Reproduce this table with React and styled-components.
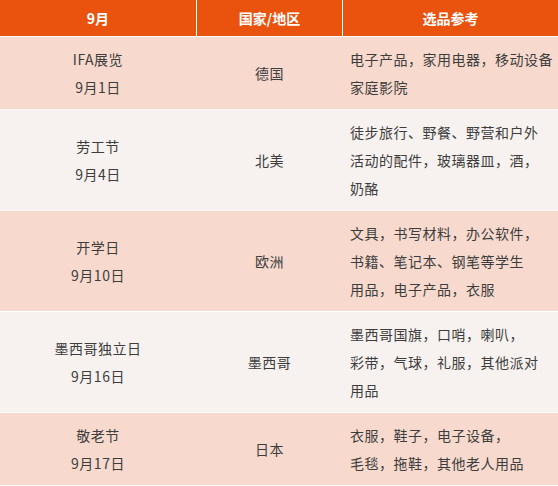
import React from 'react';
import styled, { createGlobalStyle } from 'styled-components';

const GlobalStyle = createGlobalStyle`
  html, body {
    margin: 0;
    padding: 0;
    background: #fff;
    overflow: hidden;
  }
  body {
    font-family: "Noto Sans CJK SC", "Liberation Sans", sans-serif;
  }
`;

const Table = styled.div`
  width: 558px;
  display: flex;
  flex-direction: column;
`;

const Row = styled.div`
  display: grid;
  grid-template-columns: 196px 145px 1fr;
  column-gap: 1px;
  background: ${p => p.$bg};
  border-bottom: 1px solid #fff;
`;

const HeadCell = styled.div`
  background: #e9530e;
  color: #fff;
  font-weight: bold;
  font-size: 14px;
  height: 36px;
  display: flex;
  align-items: center;
  justify-content: center;
`;

const Cell = styled.div`
  padding: 8px 7px;
  font-size: 14px;
  line-height: 28px;
  color: #3d3d3d;
  letter-spacing: 0.5px;
  display: flex;
  flex-direction: column;
  justify-content: center;
  align-items: ${p => (p.$left ? 'flex-start' : 'center')};
  text-align: ${p => (p.$left ? 'left' : 'center')};
  white-space: nowrap;
`;

const rows = [
  { name: 'IFA展览', date: '9月1日', region: '德国', goods: ['电子产品，家用电器，移动设备', '家庭影院'] },
  { name: '劳工节', date: '9月4日', region: '北美', goods: ['徒步旅行、野餐、野营和户外', '活动的配件，玻璃器皿，酒，', '奶酪'] },
  { name: '开学日', date: '9月10日', region: '欧洲', goods: ['文具，书写材料，办公软件，', '书籍、笔记本、钢笔等学生', '用品，电子产品，衣服'] },
  { name: '墨西哥独立日', date: '9月16日', region: '墨西哥', goods: ['墨西哥国旗，口哨，喇叭，', '彩带，气球，礼服，其他派对', '用品'] },
  { name: '敬老节', date: '9月17日', region: '日本', goods: ['衣服，鞋子，电子设备，', '毛毯，拖鞋，其他老人用品'] },
];

export default function App() {
  return (
    <>
      <GlobalStyle />
      <Table>
        <Row $bg="#fff">
          <HeadCell>9月</HeadCell>
          <HeadCell>国家/地区</HeadCell>
          <HeadCell>选品参考</HeadCell>
        </Row>
        {rows.map((r, i) => (
          <Row key={i} $bg={i % 2 === 0 ? '#f7dacd' : '#f7f2ef'}>
            <Cell>
              <span>{r.name}</span>
              <span>{r.date}</span>
            </Cell>
            <Cell>{r.region}</Cell>
            <Cell $left>
              {r.goods.map((g, j) => (
                <span key={j}>{g}</span>
              ))}
            </Cell>
          </Row>
        ))}
      </Table>
    </>
  );
}
